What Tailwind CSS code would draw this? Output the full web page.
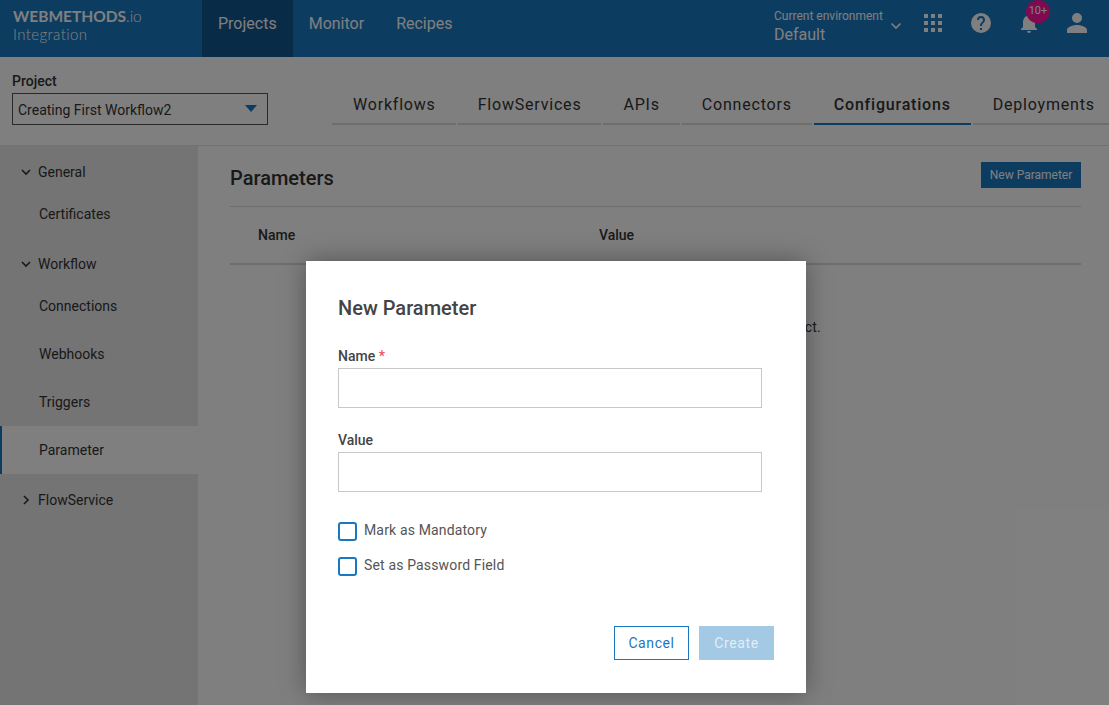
<!DOCTYPE html>
<html lang="en">
<head>
  <meta charset="UTF-8" />
  <title>Parameters</title>
  <script src="https://cdn.jsdelivr.net/npm/@tailwindcss/browser@4"></script>
</head>
<body class="relative h-[705px] w-[1109px] overflow-hidden bg-white font-['Roboto',sans-serif] text-[#333]">
  <!-- Top navigation -->
  <header class="flex h-[57px] items-stretch bg-[#1a78c2] text-white">
    <div class="w-[202px] shrink-0 pl-[13px] pt-[7px]">
      <div class="font-['Lato',sans-serif] text-[15.5px] leading-[18px] font-bold">WEBMETHODS<span class="font-light">.io</span></div>
      <div class="font-['Lato',sans-serif] text-[15px] leading-[18px] font-light tracking-[0.4px]">Integration</div>
    </div>
    <nav class="flex text-[16px]">
      <a class="flex items-center bg-[#105690] px-4 pb-[10px]">Projects</a>
      <a class="flex items-center px-4 pb-[10px]">Monitor</a>
      <a class="flex items-center px-4 pb-[10px]">Recipes</a>
    </nav>
    <div class="ml-auto flex">
      <div class="flex w-[135px] items-center">
        <div class="w-[116px] pb-[3px]">
          <div class="text-[12px] leading-[14px]">Current environment</div>
          <div class="text-[16px] leading-[23px]">Default</div>
        </div>
        <svg class="mb-[5px] h-[12px] w-[12px]" viewBox="0 0 12 12" fill="none" stroke="currentColor" stroke-width="1.6"><path d="M1.5 3.5 6 8l4.5-4.5"/></svg>
      </div>
      <div class="flex w-[48px] items-center justify-center pb-[11px]">
        <svg class="h-[20px] w-[20px]" viewBox="0 0 20 20" fill="currentColor"><rect x="1" y="1" width="4" height="4"/><rect x="8" y="1" width="4" height="4"/><rect x="15" y="1" width="4" height="4"/><rect x="1" y="8" width="4" height="4"/><rect x="8" y="8" width="4" height="4"/><rect x="15" y="8" width="4" height="4"/><rect x="1" y="15" width="4" height="4"/><rect x="8" y="15" width="4" height="4"/><rect x="15" y="15" width="4" height="4"/></svg>
      </div>
      <div class="flex w-[48px] items-center justify-center pb-[11px]">
        <svg class="h-[24px] w-[24px]" viewBox="0 0 24 24" fill="currentColor"><path d="M12 2a10 10 0 1 0 0 20 10 10 0 0 0 0-20Zm1 17h-2v-2h2v2Zm2.07-7.75-.9.92C13.45 12.9 13 13.5 13 15h-2v-.5c0-1.1.45-2.1 1.17-2.83l1.24-1.26A2 2 0 1 0 10 9H8a4 4 0 1 1 8 0c0 .88-.36 1.68-.93 2.25Z"/></svg>
      </div>
      <div class="relative flex w-[48px] items-center justify-center pb-[11px]">
        <svg class="h-[24px] w-[24px]" viewBox="0 0 24 24" fill="currentColor"><path d="M12 22a2 2 0 0 0 2-2h-4a2 2 0 0 0 2 2Zm6-6v-5c0-3.07-1.63-5.64-4.5-6.32V4a1.5 1.5 0 0 0-3 0v.68C7.64 5.36 6 7.92 6 11v5l-2 2v1h16v-1l-2-2Z"/></svg>
        <span class="absolute left-[21px] top-0 flex h-[23px] w-[24px] items-center justify-center rounded-full bg-[#ff14a0] text-[11px]">10+</span>
      </div>
      <div class="flex w-[56px] items-center justify-center pb-[11px] pr-[8px]">
        <svg class="h-[24px] w-[24px]" viewBox="0 0 24 24" fill="currentColor"><path d="M12 12a5 5 0 1 0 0-10 5 5 0 0 0 0 10Zm0 2c-3.3 0-10 1.7-10 5v3h20v-3c0-3.3-6.7-5-10-5Z" /></svg>
      </div>
    </div>
  </header>

  <!-- Project picker and tabs -->
  <div class="flex h-[89px] border-b border-[#e4e4e4]">
    <div class="w-[332px] shrink-0 pl-[12px] pt-[15px]">
      <div class="text-[14px] leading-[18px] font-medium">Project</div>
      <div class="mt-[3px] flex h-[32px] w-[256px] items-center justify-between border border-[#555] pl-[5px] pr-[10px] text-[14px]">
        <span class="mt-[2px]">Creating First Workflow2</span>
        <span class="mb-[2px] h-0 w-0 border-x-[6px] border-t-[7px] border-x-transparent border-t-[#1a78c2]"></span>
      </div>
    </div>
    <nav class="flex h-[68px] gap-[2px] pt-[31px] text-[16px] tracking-[0.8px]">
      <a class="h-[37px] border-b-2 border-[#ddd] pl-[21px] pr-[20px] pt-[5px]">Workflows</a>
      <a class="h-[37px] border-b-2 border-[#ddd] px-[20px] pt-[5px]">FlowServices</a>
      <a class="h-[37px] border-b-2 border-[#ddd] px-[20px] pt-[5px]">APIs</a>
      <a class="h-[37px] border-b-2 border-[#ddd] px-[20px] pt-[5px]">Connectors</a>
      <a class="h-[37px] border-b-2 border-[#1a78c2] px-[20px] pt-[5px] font-medium">Configurations</a>
      <a class="h-[37px] border-b-2 border-[#ddd] px-[20px] pt-[5px] whitespace-nowrap">Deployments</a>
    </nav>
  </div>

  <div class="flex h-[559px]">
    <!-- Sidebar -->
    <aside class="w-[198px] shrink-0 bg-[#e8e8e8] text-[14px]">
      <div class="flex h-[52px] items-center gap-[7px] pl-[21px]">
        <svg class="h-[10px] w-[10px]" viewBox="0 0 10 10" fill="none" stroke="currentColor" stroke-width="1.6"><path d="M1 3l4 4 4-4"/></svg>
        <span>General</span>
      </div>
      <div class="flex h-[32px] items-center pl-[39px]">Certificates</div>
      <div class="mt-[8px] flex h-[52px] items-center gap-[7px] pl-[21px]">
        <svg class="h-[10px] w-[10px]" viewBox="0 0 10 10" fill="none" stroke="currentColor" stroke-width="1.6"><path d="M1 3l4 4 4-4"/></svg>
        <span>Workflow</span>
      </div>
      <div class="-mt-[8px] flex h-[48px] items-center pl-[39px]">Connections</div>
      <div class="flex h-[48px] items-center pl-[39px]">Webhooks</div>
      <div class="flex h-[48px] items-center pl-[39px]">Triggers</div>
      <div class="flex h-[48px] items-center border-l-2 border-[#1a78c2] bg-white pl-[37px]">Parameter</div>
      <div class="flex h-[52px] items-center gap-[7px] pl-[21px]">
        <svg class="h-[10px] w-[10px]" viewBox="0 0 10 10" fill="none" stroke="currentColor" stroke-width="1.6"><path d="M3 1l4 4-4 4"/></svg>
        <span>FlowService</span>
      </div>
    </aside>

    <!-- Main content -->
    <main class="w-[911px] pl-[32px] pr-[28px]">
      <div class="flex h-[61px] items-center justify-between border-b border-[#ddd] pb-[1px]">
        <h1 class="mt-[5px] text-[20px] font-medium">Parameters</h1>
        <button class="-mt-[1px] h-[26px] w-[100px] bg-[#1a78c2] text-[12px] text-white">New Parameter</button>
      </div>
      <div class="flex h-[58px] items-center border-b-2 border-[#ddd] pl-[28px] text-[14px] font-medium">
        <div class="w-[341px]">Name</div>
        <div>Value</div>
      </div>
      <p class="mt-[53px] text-center text-[14px] leading-[18px] tracking-[0.2px]">There are no parameters configured for this project.</p>
    </main>
  </div>

  <!-- Modal -->
  <div class="absolute inset-0 flex justify-center bg-black/50 pl-[3px] pt-[261px]">
    <div class="h-[432px] w-[500px] bg-white px-[32px] pt-[34px] shadow-[0_0_24px_rgba(0,0,0,0.35)]">
      <h2 class="text-[20px] leading-[26px] font-medium text-[#444]">New Parameter</h2>
      <label class="mt-[26px] block text-[14px] leading-[18px] font-medium text-[#444]">Name <span class="text-[#f0505f]">*</span></label>
      <input class="mt-[3px] block h-[40px] w-[424px] border border-[#c8c8c8] bg-white" />
      <label class="mt-[23px] block text-[14px] leading-[18px] font-medium text-[#444]">Value</label>
      <input class="mt-[3px] block h-[40px] w-[424px] border border-[#c8c8c8] bg-white" />
      <div class="mt-[29px] flex h-[20px] items-center gap-[7px] text-[14px] text-[#555]">
        <span class="h-[19px] w-[19px] rounded-[3px] border-2 border-[#1a78c2]"></span>
        <span class="-mt-[1px] tracking-[0.15px]">Mark as Mandatory</span>
      </div>
      <div class="mt-[15px] flex h-[20px] items-center gap-[7px] text-[14px] text-[#555]">
        <span class="h-[19px] w-[19px] rounded-[3px] border-2 border-[#1a78c2]"></span>
        <span class="-mt-[1px] tracking-[0.15px]">Set as Password Field</span>
      </div>
      <div class="mt-[50px] flex justify-end gap-[10px] text-[14px] tracking-[0.6px]">
        <button class="h-[34px] w-[75px] border border-[#1a78c2] text-[#1a78c2]">Cancel</button>
        <button class="h-[34px] w-[75px] bg-[#a3c9e5] text-white/70">Create</button>
      </div>
    </div>
  </div>
</body>
</html>
